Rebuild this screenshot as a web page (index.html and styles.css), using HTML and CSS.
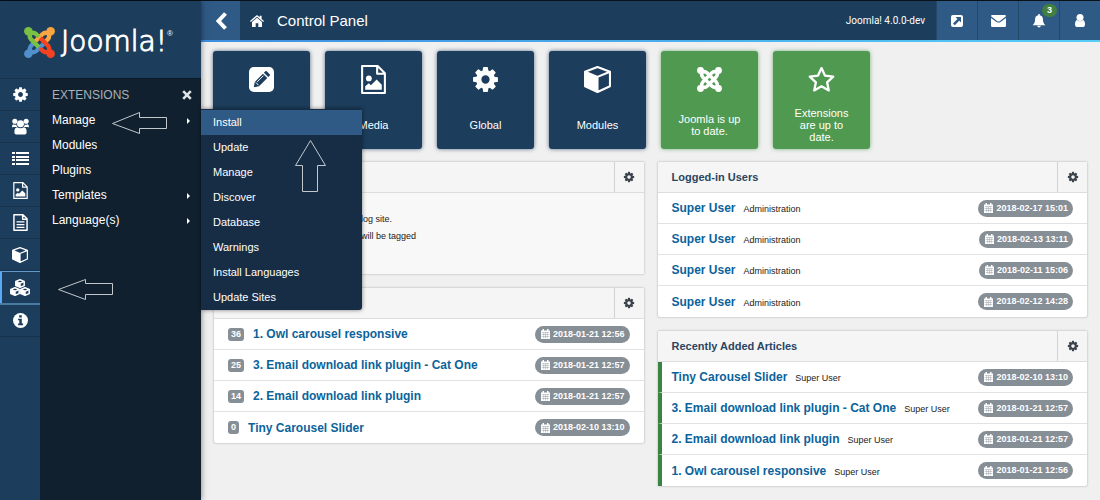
FILE: index.html
```html
<!DOCTYPE html>
<html lang="en">
<head>
<meta charset="utf-8">
<title>Control Panel</title>
<link rel="stylesheet" href="styles.css">
</head>
<body>
<svg class="sprite" width="0" height="0" aria-hidden="true">
  <symbol id="cog" viewBox="0 0 1792 1792"><path fill="currentColor" d="M1152 896q0-106-75-181t-181-75-181 75-75 181 75 181 181 75 181-75 75-181zm512-109v222q0 12-8 23t-20 13l-185 28q-19 54-39 91 35 50 107 138 10 12 10 25t-9 23q-27 37-99 108t-94 71q-12 0-26-9l-138-108q-44 23-91 38-16 136-29 186-7 28-36 28h-222q-14 0-24.5-8.5t-11.5-21.5l-28-184q-49-16-90-37l-141 107q-10 9-25 9-14 0-25-11-126-114-165-168-7-10-7-23 0-12 8-23 15-21 51-66.5t54-70.5q-27-50-41-99l-183-27q-13-2-21-12.5t-8-23.5v-222q0-12 8-23t19-13l186-28q14-46 39-92-40-57-107-138-10-12-10-24 0-10 9-23 26-36 98.500-107.500t94.500-71.500q13 0 26 10l138 107q44-23 91-38 16-136 29-186 7-28 36-28h222q14 0 24.500 8.500t11.500 21.500l28 184q49 16 90 37l142-107q9-9 24-9 13 0 25 10 129 119 165 170 7 8 7 22 0 12-8 23-15 21-51 66.500t-54 70.500q26 50 41 98l183 28q13 2 21 12.500t8 23.500z"/></symbol>
  <symbol id="users" viewBox="0 0 20 18"><g fill="currentColor"><circle cx="4" cy="3.500" r="2.700"/><circle cx="16" cy="3.500" r="2.700"/><circle cx="10" cy="6" r="3.700"/><path d="M1 9.500Q1 6.500 2.500 6.500Q4 7.500 5.500 6.800Q5.800 8.500 6.800 9.600H2.500Q1 10 1 9.500ZM19 9.500Q19 6.500 17.500 6.500Q16 7.500 14.500 6.800Q14.200 8.500 13.200 9.600H17.500Q19 10 19 9.500ZM3.500 15Q3.500 10 6.500 9.800Q10 12 13.500 9.800Q16.500 10 16.500 15Q16.500 17.500 14.500 17.500H5.500Q3.500 17.500 3.500 15Z"/></g></symbol>
  <symbol id="list" viewBox="0 0 17 13"><path fill="currentColor" d="M0 0H3V2H0ZM4 0H17V2H4ZM0 4H3V6H0ZM4 4H17V6H4ZM0 7H3V9H0ZM4 7H17V9H4ZM0 11H3V13H0ZM4 11H17V13H4Z"/></symbol>
  <symbol id="image" viewBox="0 0 24 28"><path fill="none" stroke="currentColor" stroke-width="2" stroke-linejoin="round" d="M1 1H16L23 8V27H1ZM15.500 1V8.500H23"/><circle cx="7.500" cy="13" r="2.800" fill="currentColor"/><path fill="currentColor" d="M4 24V20.500L7.500 17.500L9.500 19.500L15 14L20 19V24Z"/></symbol>
  <symbol id="doc" viewBox="0 0 24 28"><path fill="none" stroke="currentColor" stroke-width="2.400" stroke-linejoin="round" d="M1.200 1.200H16L22.800 8V26.800H1.200ZM15.500 1V8.500H23M5.500 13H18.500M5.500 17.500H18.500M5.500 22H18.500"/></symbol>
  <symbol id="cube" viewBox="0 0 26 26"><path fill="none" stroke="currentColor" stroke-width="2" stroke-linejoin="round" d="M13 1L25 5.500V19.500L13 25L1 19.500V5.500ZM1 5.500L13 10.500L25 5.500M13 10.500V25"/><path fill="currentColor" d="M1 5.500L13 10.500V25L1 19.500Z"/></symbol>
  <symbol id="minicube" viewBox="0 0 10 9"><path fill="none" stroke="currentColor" stroke-width="1.500" stroke-linejoin="round" d="M5 .8L9.200 2.400V6.600L5 8.200L.8 6.600V2.400ZM.8 2.400L5 4.200L9.200 2.400M5 4.200V8"/><path fill="currentColor" d="M.8 2.400L5 4.200V8.200L.8 6.600Z"/></symbol>
  <symbol id="cubes" viewBox="0 0 20 17"><use href="#minicube" x="5" y="0" width="10" height="9"/><use href="#minicube" x="0" y="8" width="10" height="9"/><use href="#minicube" x="10" y="8" width="10" height="9"/></symbol>
  <symbol id="info" viewBox="0 0 16 16"><circle cx="8" cy="8" r="8" fill="currentColor"/><path fill="#1c3d5c" d="M6.600 2.300H9.400V4.700H6.600ZM5.400 6H9.400V11.300H10.800V13H5.400V11.300H6.700V7.600H5.400Z"/></symbol>
  <symbol id="pencil" viewBox="0 0 26 26"><rect x="0" y="0" width="26" height="26" rx="5" fill="currentColor"/><path fill="#1c3d5c" d="M5 21L6 15.500L14.500 7L19 11.500L10.500 20ZM15.500 6L17 4.500Q17.800 4 18.500 4.500L21.500 7.500Q22 8.200 21.500 9L20 10.500Z"/><path d="M7 16L10 19M8.500 15.500L15 9" stroke="currentColor" fill="none"/></symbol>
  <symbol id="home" viewBox="0 0 14 12"><path fill="currentColor" d="M7 2.800L12 7V11.500Q12 12 11.500 12H8.300V8.300H5.700V12H2.500Q2 12 2 11.500V7ZM7 0L9.600 2.200V.8H11.600V3.900L14 6L13.200 7L7 1.800L.8 7L0 6Z"/></symbol>
  <symbol id="chevron" viewBox="0 0 12 18"><path fill="none" stroke="currentColor" stroke-width="4" d="M10.500 1.500L3.500 9L10.500 16.500"/></symbol>
  <symbol id="external" viewBox="0 0 12 12"><rect width="12" height="12" rx="2" fill="currentColor"/><path fill="#2f5a85" d="M4.500 2H10V7.500L8.200 5.800L3.800 10.200L2 8.400L6.400 3.900Z"/></symbol>
  <symbol id="mail" viewBox="0 0 15 12"><path fill="currentColor" d="M0 1.300Q0 0 1.300 0H13.700Q15 0 15 1.300L9 6Q7.500 7 6 6ZM0 3L5.500 7Q7.500 8.200 9.500 7L15 3V10.700Q15 12 13.700 12H1.300Q0 12 0 10.700Z"/></symbol>
  <symbol id="bell" viewBox="0 0 14 15"><path fill="currentColor" d="M6.200 0H7.800V1.300Q11.200 2 11.200 5.500Q11.200 10 14 12H0Q2.800 10 2.800 5.500Q2.800 2 6.200 1.300ZM5 12.700H9Q8.700 14.500 7 14.500Q5.300 14.500 5 12.700Z"/></symbol>
  <symbol id="user" viewBox="0 0 12 13"><circle cx="6" cy="3.600" r="3.500" fill="currentColor"/><path fill="currentColor" d="M1 10.500Q1 6.500 3 6Q6 8.500 9 6Q11 6.500 11 10.500Q11 13 9 13H3Q1 13 1 10.500Z"/></symbol>
  <symbol id="star" viewBox="0 0 26 26"><path fill="none" stroke="currentColor" stroke-width="2.200" stroke-linejoin="round" d="M13 2L16.300 9.200L24.300 10.200L18.400 15.700L20 23.500L13 19.600L6 23.500L7.600 15.700L1.700 10.200L9.700 9.200Z"/></symbol>
  <symbol id="calendar" viewBox="0 0 9 10"><path fill="currentColor" d="M0 1.500H1.500V0H3V1.500H6V0H7.500V1.500H9V10H0Z"/><path stroke="#868e96" stroke-width=".4" fill="none" d="M.7 3.500H8.300M.7 5.500H8.300M.7 7.500H8.300M2.700 3.500V9.300M4.500 3.500V9.300M6.300 3.500V9.300"/></symbol>
  <symbol id="times" viewBox="0 0 10 10"><path fill="none" stroke="currentColor" stroke-width="2.600" d="M1.200 1.200L8.800 8.800M8.800 1.200L1.200 8.800"/></symbol>
  <symbol id="strand" viewBox="0 0 30 30"><circle cx="4.200" cy="4.200" r="4.100" fill="currentColor"/><path fill="none" stroke="currentColor" stroke-width="4.200" d="M14.500 9.500L12 7Q9 4.500 6.300 6.300Q4.500 9.500 7 12.200L14.300 19.500"/></symbol>
  <symbol id="joomla" viewBox="0 0 30 30"><use href="#strand" width="30" height="30"/><use href="#strand" width="30" height="30" transform="rotate(90 15 15)"/><use href="#strand" width="30" height="30" transform="rotate(180 15 15)"/><use href="#strand" width="30" height="30" transform="rotate(270 15 15)"/></symbol>
</svg>

<div class="app">
  <aside class="sidebar">
    <a class="brand" href="#">
      <svg class="mark" viewBox="0 0 30 30" aria-hidden="true">
        <use class="blue" href="#strand" width="30" height="30" transform="rotate(270 15 15)"/>
        <use class="orange" href="#strand" width="30" height="30" transform="rotate(90 15 15)"/>
        <use class="green" href="#strand" width="30" height="30"/>
        <use class="red" href="#strand" width="30" height="30" transform="rotate(180 15 15)"/>
      </svg>
      <span class="wordmark">Joomla!</span><span class="reg">®</span>
    </a>
    <div class="menus">
      <nav class="rail" aria-label="Main menu">
        <a href="#" aria-label="System"><svg width="17" height="17"><use href="#cog"/></svg></a>
        <a href="#" aria-label="Users"><svg width="19" height="17"><use href="#users"/></svg></a>
        <a href="#" aria-label="Menus"><svg width="17" height="13"><use href="#list"/></svg></a>
        <a href="#" aria-label="Media"><svg width="15" height="17"><use href="#image"/></svg></a>
        <a href="#" aria-label="Content"><svg width="15" height="17"><use href="#doc"/></svg></a>
        <a href="#" aria-label="Components"><svg width="16" height="16"><use href="#cube"/></svg></a>
        <a class="active" href="#" aria-label="Extensions"><svg width="20" height="17"><use href="#cubes"/></svg></a>
        <a href="#" aria-label="Help"><svg width="15" height="15"><use href="#info"/></svg></a>
      </nav>
      <nav class="submenu" aria-label="Extensions">
        <div class="submenu-head"><h2>EXTENSIONS</h2><button type="button" aria-label="Close"><svg width="10" height="10"><use href="#times"/></svg></button></div>
        <ul>
          <li class="more"><a href="#">Manage</a>
            <ul class="flyout">
              <li><a class="current" href="#">Install</a></li>
              <li><a href="#">Update</a></li>
              <li><a href="#">Manage</a></li>
              <li><a href="#">Discover</a></li>
              <li><a href="#">Database</a></li>
              <li><a href="#">Warnings</a></li>
              <li><a href="#">Install Languages</a></li>
              <li><a href="#">Update Sites</a></li>
            </ul>
          </li>
          <li><a href="#">Modules</a></li>
          <li><a href="#">Plugins</a></li>
          <li class="more"><a href="#">Templates</a></li>
          <li class="more"><a href="#">Language(s)</a></li>
        </ul>
      </nav>
    </div>
  </aside>

  <div class="page">
    <header class="topbar">
      <button class="back" type="button" aria-label="Collapse menu"><svg width="12" height="18"><use href="#chevron"/></svg></button>
      <a class="home" href="#" aria-label="Home"><svg width="14" height="12"><use href="#home"/></svg></a>
      <h1>Control Panel</h1>
      <span class="version">Joomla! 4.0.0-dev</span>
      <div class="tools">
        <a href="#" aria-label="Preview"><svg width="12" height="12"><use href="#external"/></svg></a>
        <a href="#" aria-label="Messages"><svg width="15" height="12"><use href="#mail"/></svg></a>
        <a href="#" aria-label="Notifications"><svg width="14" height="14"><use href="#bell"/></svg><span class="alert">3</span></a>
        <a href="#" aria-label="Account"><svg width="12" height="13"><use href="#user"/></svg></a>
      </div>
    </header>

    <main>
      <div class="cards">
        <a class="card" href="#" aria-label="New article"><svg width="25" height="25"><use href="#pencil"/></svg></a>
        <a class="card" href="#"><svg width="25" height="29"><use href="#image"/></svg><span>Media</span></a>
        <a class="card" href="#"><svg width="29" height="29"><use href="#cog"/></svg><span>Global</span></a>
        <a class="card" href="#"><svg width="27" height="27"><use href="#cube"/></svg><span>Modules</span></a>
        <a class="card ok" href="#"><svg width="25" height="25"><use href="#joomla"/></svg><span>Joomla is up to date.</span></a>
        <a class="card ok" href="#"><svg width="27" height="27"><use href="#star"/></svg><span>Extensions are up to date.</span></a>
      </div>

      <div class="columns">
        <div class="column">
          <section class="panel" aria-label="Sample data">
            <header><button type="button" aria-label="Options"><svg width="12" height="12"><use href="#cog"/></svg></button></header>
            <div class="note"><p>Sample data which will set up a blog site.</p><p>If the site is multilingual, the data will be tagged</p></div>
          </section>
          <section class="panel" aria-label="Popular articles">
            <header><button type="button" aria-label="Options"><svg width="12" height="12"><use href="#cog"/></svg></button></header>
            <ul>
              <li><span class="hits">36</span><a href="#">1. Owl carousel responsive</a><time><svg width="9" height="10"><use href="#calendar"/></svg>2018-01-21 12:56</time></li>
              <li><span class="hits">25</span><a href="#">3. Email download link plugin - Cat One</a><time><svg width="9" height="10"><use href="#calendar"/></svg>2018-01-21 12:57</time></li>
              <li><span class="hits">14</span><a href="#">2. Email download link plugin</a><time><svg width="9" height="10"><use href="#calendar"/></svg>2018-01-21 12:57</time></li>
              <li><span class="hits">0</span><a href="#">Tiny Carousel Slider</a><time><svg width="9" height="10"><use href="#calendar"/></svg>2018-02-10 13:10</time></li>
            </ul>
          </section>
        </div>
        <div class="column">
          <section class="panel">
            <header><h3>Logged-in Users</h3><button type="button" aria-label="Options"><svg width="12" height="12"><use href="#cog"/></svg></button></header>
            <ul>
              <li><a href="#">Super User</a><small>Administration</small><time><svg width="9" height="10"><use href="#calendar"/></svg>2018-02-17 15:01</time></li>
              <li><a href="#">Super User</a><small>Administration</small><time><svg width="9" height="10"><use href="#calendar"/></svg>2018-02-13 13:11</time></li>
              <li><a href="#">Super User</a><small>Administration</small><time><svg width="9" height="10"><use href="#calendar"/></svg>2018-02-11 15:06</time></li>
              <li><a href="#">Super User</a><small>Administration</small><time><svg width="9" height="10"><use href="#calendar"/></svg>2018-02-12 14:28</time></li>
            </ul>
          </section>
          <section class="panel published">
            <header><h3>Recently Added Articles</h3><button type="button" aria-label="Options"><svg width="12" height="12"><use href="#cog"/></svg></button></header>
            <ul>
              <li><a href="#">Tiny Carousel Slider</a><small>Super User</small><time><svg width="9" height="10"><use href="#calendar"/></svg>2018-02-10 13:10</time></li>
              <li><a href="#">3. Email download link plugin - Cat One</a><small>Super User</small><time><svg width="9" height="10"><use href="#calendar"/></svg>2018-01-21 12:57</time></li>
              <li><a href="#">2. Email download link plugin</a><small>Super User</small><time><svg width="9" height="10"><use href="#calendar"/></svg>2018-01-21 12:57</time></li>
              <li><a href="#">1. Owl carousel responsive</a><small>Super User</small><time><svg width="9" height="10"><use href="#calendar"/></svg>2018-01-21 12:56</time></li>
            </ul>
          </section>
        </div>
      </div>
    </main>
  </div>

  <svg class="arrows" width="340" height="310" aria-hidden="true">
    <path d="M112.500 123.500L139.500 112.500V117.500H166.500V128.500H139.500V133.500Z"/>
    <path d="M58.500 289.500L85.500 279.500V283.500H112.500V294.500H85.500V299.500Z"/>
    <path d="M310.500 140.500L325.500 165.500H317.500V191.500H302.500V165.500H295.500Z"/>
  </svg>
</div>
</body>
</html>
```

FILE: styles.css
```css
* { box-sizing: border-box; }

body {
  margin: 0;
  background: #f0f0f0;
  font: 12px/16px "Liberation Sans", Arial, sans-serif;
  color: #222;
}

h1, h2, h3, p, ul { margin: 0; padding: 0; font-weight: normal; }
ul { list-style: none; }
a { color: inherit; text-decoration: none; }
button { border: 0; padding: 0; background: none; color: inherit; font: inherit; cursor: pointer; }
svg { display: block; flex: none; }
.sprite { position: absolute; }

.app {
  position: relative;
  display: grid;
  grid-template-columns: 201px 1fr;
  min-height: 100vh;
  border-top: 1px solid #0b1119;
}

/* Sidebar */
.sidebar {
  position: relative;
  z-index: 2;
  display: flex;
  flex-direction: column;
  background: #1c3d5c;
  color: #fff;
  box-shadow: 0 0 6px rgba(0, 0, 0, .5);
}
.brand {
  display: flex;
  align-items: center;
  height: 77px;
  padding: 5px 0 0 24px;
}
.mark { width: 31px; height: 31px; margin-right: 6px; }
.green { color: #7ac143; }
.orange { color: #f9a541; }
.red { color: #f44321; }
.blue { color: #5091cd; }
.wordmark { font: 200 28px/30px "DejaVu Sans", sans-serif; -webkit-text-stroke: 1px #fff; }
.reg { align-self: flex-start; padding-top: 20px; font-size: 8px; }

.menus { flex: 1; display: grid; grid-template-columns: 40px 1fr; }
.rail { display: flex; flex-direction: column; border-top: 1px solid #17324c; }
.rail a {
  display: flex;
  align-items: center;
  justify-content: center;
  height: 32px;
  border-bottom: 1px solid #17324c;
}
.rail .active {
  height: 34px;
  border-top: 1px solid #5f9bc9;
  border-bottom: 2px solid #4b7ba3;
  box-shadow: inset 2px 0 #5aa9f5;
}
.submenu { background: #10202f; border-top: 1px solid #0c1b29; }
.submenu-head {
  display: flex;
  justify-content: space-between;
  align-items: center;
  height: 29px;
  padding: 3px 9px 0 12px;
}
.submenu-head h2 { font-size: 12px; color: #a9b0b7; }
.submenu-head button { color: #dfe3e6; }
.submenu li { position: relative; }
.submenu a { display: block; padding-left: 12px; line-height: 25px; }
.more::after {
  content: "";
  position: absolute;
  top: 10px;
  right: 11px;
  border: 3px solid transparent;
  border-left-color: #fff;
  border-right: 0;
}
.flyout {
  position: absolute;
  top: 1px;
  left: 100%;
  width: 161px;
  padding: 1px 0 0;
  background: #172d45;
  border-radius: 0 0 3px 0;
  box-shadow: 0 0 4px rgba(0, 0, 0, .5);
  font-size: 11px;
}
.flyout .current { background: #2f5a85; }

/* Top bar */
.page { min-width: 0; }
.topbar {
  display: flex;
  align-items: stretch;
  height: 41px;
  background: #1c3d5c;
  color: #fff;
  border-bottom: 2px solid;
  border-image: linear-gradient(90deg, #3f8ee0, #55cdf7) 1;
}
.topbar a, .back { display: flex; align-items: center; justify-content: center; }
.back { width: 39px; background: #2f5a85; }
.topbar .home { padding: 1px 13px 0 10px; }
h1 { font-size: 15px; line-height: 39px; }
.version { margin-left: auto; padding-right: 11px; font: 10px/39px Roboto, sans-serif; }
.tools { display: flex; background: #2f5a85; }
.tools a { position: relative; width: 41px; border-left: 1px solid #234868; }
.alert {
  position: absolute;
  top: 3px;
  right: 2px;
  width: 15px;
  border-radius: 7px;
  background: #418040;
  font-size: 9px;
  font-weight: bold;
  line-height: 13px;
  text-align: center;
}

/* Dashboard */
main { padding: 9px 12px 12px; }
.cards { display: flex; flex-wrap: wrap; gap: 15px; margin-bottom: 12px; }
.card {
  display: grid;
  grid-template-rows: 56px 1fr;
  place-items: center;
  width: 97px;
  height: 98px;
  padding-bottom: 6px;
  border-radius: 3px;
  background: #1c3d5c;
  color: #fff;
  text-align: center;
  font-size: 11px;
  line-height: 12px;
  box-shadow: 0 0 4px rgba(28, 61, 92, .7);
}
.card span { width: 66px; }
.ok { background: #4f9a50; box-shadow: 0 0 4px rgba(79, 154, 80, .7); }

.columns { display: grid; grid-template-columns: 1fr 1fr; gap: 12px; }
.column { display: flex; flex-direction: column; gap: 12px; }
.panel {
  border: 1px solid #d9d9d9;
  border-radius: 3px;
  background: #fff;
  box-shadow: 0 0 2px rgba(0, 0, 0, .1);
}
.panel header {
  display: flex;
  height: 31px;
  padding-left: 14px;
  background: #f5f5f5;
  border-bottom: 1px solid #ddd;
}
.panel h3 { font-size: 11px; font-weight: bold; line-height: 31px; color: #2b4560; }
.panel header button {
  display: grid;
  place-items: center;
  width: 30px;
  margin-left: auto;
  border-left: 1px solid #d3d3d3;
  color: #3a424b;
}
.panel li {
  display: flex;
  align-items: center;
  height: 31px;
  padding: 0 14px;
  border-bottom: 1px solid #e2e2e2;
}
.panel li:last-child { border-bottom: 0; }
.panel li a { color: #0b639b; font-weight: bold; }
.panel small { margin-left: 8px; font-size: 9px; padding-top: 2px; }
.panel time {
  display: flex;
  align-items: center;
  gap: 3px;
  margin-left: auto;
  padding: 0 5px 0 6px;
  border-radius: 9px;
  background: #868e96;
  color: #fff;
  font-size: 9px;
  font-weight: bold;
  line-height: 17px;
}
.hits {
  margin-right: 9px;
  padding: 0 3px;
  border-radius: 3px;
  background: #868e96;
  color: #fff;
  font-size: 9px;
  font-weight: bold;
  line-height: 13px;
}
.published li { padding-left: 10px; border-left: 4px solid #3b8340; }
.note { padding: 18px 14px 29px; background: #f8f8f8; font-size: 9px; line-height: 17px; }

/* Pointer arrows over the menus */
.arrows {
  position: absolute;
  z-index: 3;
  top: -1px;
  left: 0;
  fill: none;
  stroke: #c3c8cd;
  pointer-events: none;
}
```
